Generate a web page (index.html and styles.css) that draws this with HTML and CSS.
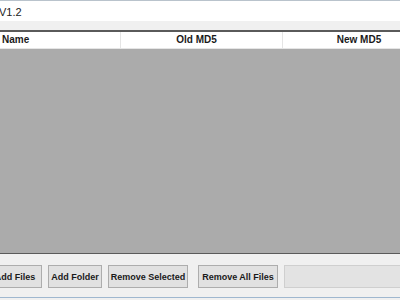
FILE: index.html
```html
<!DOCTYPE html>
<html>
<head>
<meta charset="utf-8">
<link rel="stylesheet" href="styles.css">
</head>
<body>
<div class="window">
  <div class="titlebar"><span class="title">V1.2</span></div>
  <div class="band"></div>
  <div class="listview">
    <div class="header">
      <div class="col col-name">Name</div>
      <div class="col col-old">Old MD5</div>
      <div class="col col-new">New MD5</div>
    </div>
    <div class="list-body"></div>
  </div>
  <div class="footer">
    <div class="buttons">
      <button class="btn btn-add-files">Add Files</button>
      <button class="btn btn-add-folder">Add Folder</button>
      <button class="btn btn-remove-sel">Remove Selected</button>
      <button class="btn btn-remove-all">Remove All Files</button>
      <div class="textbox"></div>
    </div>
  </div>
  <div class="bottom-edge"></div>
</div>
</body>
</html>
```
FILE: styles.css
```css
html, body {
  margin: 0;
  padding: 0;
  width: 400px;
  height: 300px;
  overflow: hidden;
  background: #f0f0f0;
  font-family: "Liberation Sans", Arial, sans-serif;
}

.window {
  display: flex;
  flex-direction: column;
  width: 400px;
  height: 300px;
  overflow: hidden;
}

.titlebar {
  height: 21px;
  background: #ffffff;
  border-top: 1px solid #b9c3cc;
  box-sizing: border-box;
  display: flex;
  align-items: center;
}

.title {
  font-size: 11px;
  color: #222;
  margin-left: -1px;
  margin-top: 1px;
}

.band {
  height: 9px;
  background: #f0f0f0;
}

.listview {
  display: flex;
  flex-direction: column;
  border-top: 2px solid #5a5a5a;
  border-bottom: 1px solid #5a5a5a;
  height: 224px;
  box-sizing: border-box;
  overflow: hidden;
}

.header {
  display: flex;
  height: 17px;
  background: #ffffff;
  border-bottom: 1px solid #e5e5e5;
  box-sizing: border-box;
  margin-left: -40px;
}

.col {
  flex-shrink: 0;
  font-weight: bold;
  font-size: 10px;
  color: #1a1a1a;
  line-height: 16px;
  border-right: 1px solid #e5e5e5;
  box-sizing: border-box;
  white-space: nowrap;
}

.col-name {
  width: 161px;
  padding-left: 42px;
}

.col-old {
  width: 162px;
  text-align: center;
  padding-right: 10px;
}

.col-new {
  width: 162px;
  text-align: center;
  padding-right: 10px;
  border-right: none;
}

.list-body {
  flex: 1;
  background: #ababab;
}

.footer {
  height: 43px;
  background: #f0f0f0;
  overflow: hidden;
}

.buttons {
  display: flex;
  align-items: flex-start;
  margin-left: -12px;
  margin-top: 11px;
  gap: 6px;
}

.btn {
  flex-shrink: 0;
  height: 23px;
  box-sizing: border-box;
  background: #e1e1e1;
  border: 1px solid #adadad;
  border-radius: 0;
  padding: 0;
  font-family: "Liberation Sans", Arial, sans-serif;
  font-weight: bold;
  font-size: 9px;
  color: #1a1a1a;
  margin: 0;
  white-space: nowrap;
}

.btn-add-files { width: 54px; }
.btn-add-folder { width: 54px; }
.btn-remove-sel { width: 80px; }
.btn-remove-all { width: 80px; margin-left: 4px; }

.textbox {
  flex-shrink: 0;
  width: 130px;
  height: 23px;
  box-sizing: border-box;
  background: #e3e3e3;
  border: 1px solid #cfcfcf;
}

.bottom-edge {
  height: 3px;
  background: #f0f0f0;
  border-top: 1px solid #9fb7cf;
  box-sizing: border-box;
}
```
